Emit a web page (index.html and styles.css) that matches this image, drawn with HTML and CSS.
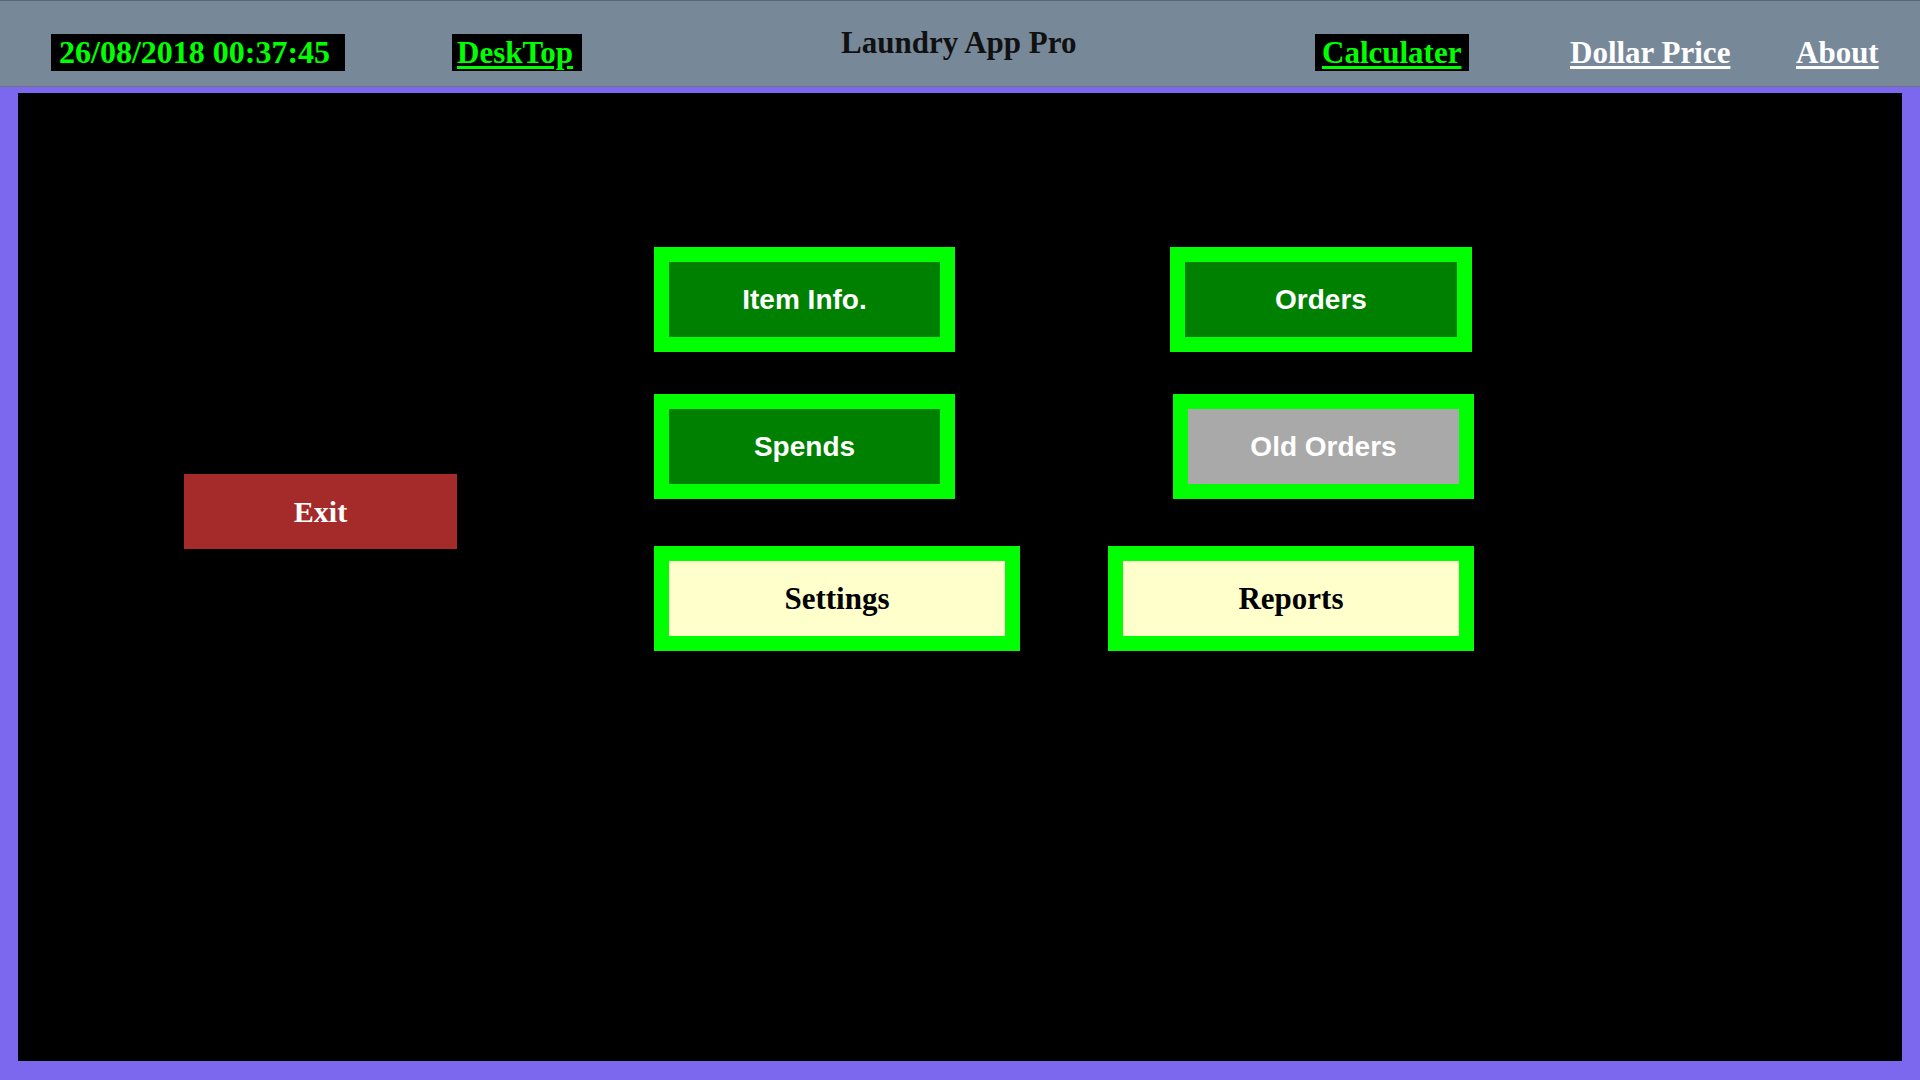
FILE: index.html
```html
<html lang="en">
<head>
    <meta charset="UTF-8">
    <meta name="viewport" content="width=device-width, initial-scale=1.0">
    <title>Laundry App Pro</title>

    <link rel="stylesheet" href="styles.css">
</head>
<body>
    <header class="topbar">
        <div class="topbar__clock" id="clock">26/08/2018 00:37:45</div>
        <a class="topbar__link topbar__link--boxed topbar__desk" href="#">DeskTop</a>
        <h1 class="topbar__title">Laundry App Pro</h1>
        <a class="topbar__link topbar__link--boxed topbar__calc" href="#">Calculater</a>
        <a class="topbar__link topbar__link--plain topbar__dollar" href="#">Dollar Price</a>
        <a class="topbar__link topbar__link--plain topbar__about" href="#">About</a>
    </header>

    <div class="frame">
        <div class="panel">
            <button class="exit">Exit</button>

            <div class="menu">
                <div class="menu__row">
                    <button class="tile tile--green">Item Info.</button>
                    <button class="tile tile--green tile--orders">Orders</button>
                </div>
                <div class="menu__row menu__row--second">
                    <button class="tile tile--green">Spends</button>
                    <button class="tile tile--gray tile--old">Old Orders</button>
                </div>
                <div class="menu__row menu__row--third">
                    <button class="tile tile--yellow">Settings</button>
                    <button class="tile tile--yellow tile--reports">Reports</button>
                </div>
            </div>
        </div>
    </div>
</body>
</html>
```

FILE: styles.css
```css
html, body {
    margin: 0;
    height: 100%;
}

body {
    display: flex;
    flex-direction: column;
    background-color: #7b68ee;
    font-family: "Liberation Serif", "Times New Roman", serif;
}

/* top bar */
.topbar {
    box-sizing: border-box;
    height: 87px;
    display: flex;
    align-items: flex-start;
    padding: 23px 0 0 51px;
    background-color: #778899;
    border-top: 1px solid #5c6670;
    border-bottom: 1px solid #6a7682;
}

.topbar > * {
    box-sizing: border-box;
    height: 37px;
    line-height: 37px;
    margin: 10px 0 0 0;
    font-size: 31px;
    font-weight: bold;
    white-space: nowrap;
}

.topbar__clock {
    width: 294px;
    padding-left: 8px;
    font-size: 32px;
    color: #00ff00;
    background-color: #000;
}

.topbar__link {
    text-decoration: underline;
    text-decoration-thickness: 3px;
    text-underline-offset: 3px;
}

.topbar__link--boxed {
    padding-left: 5px;
    color: #00ff00;
    background-color: #000;
}

.topbar__link--plain {
    color: #fff;
}

.topbar__desk {
    width: 130px;
    margin-left: 107px;
}

.topbar__title {
    width: 233px;
    margin: 0 0 0 259px;
    color: #111;
}

.topbar__calc {
    width: 154px;
    margin-left: 241px;
    padding-left: 7px;
}

.topbar__dollar {
    width: 159px;
    margin-left: 101px;
}

.topbar__about {
    width: 84px;
    margin-left: 67px;
}

/* main area */
.frame {
    flex: 1;
    display: flex;
    padding: 6px 18px 19px 18px;
}

.panel {
    flex: 1;
    display: flex;
    align-items: flex-start;
    padding: 154px 0 0 166px;
    background-color: #000;
}

button {
    box-sizing: border-box;
    margin: 0;
    padding: 0;
    cursor: pointer;
}

.exit {
    width: 273px;
    height: 75px;
    margin-top: 227px;
    border: none;
    color: #fff;
    background-color: #a52a2a;
    font-family: "Liberation Serif", "Times New Roman", serif;
    font-size: 30px;
    font-weight: bold;
}

.menu {
    margin-left: 197px;
}

.menu__row {
    display: flex;
}

.menu__row--second {
    margin-top: 42px;
}

.menu__row--third {
    margin-top: 47px;
}

.tile {
    width: 301px;
    height: 105px;
    border: 15px solid #00ff00;
    font-size: 28px;
    font-weight: bold;
}

.tile--green {
    color: #fff;
    background-color: #008000;
    font-family: "Liberation Sans", Arial, sans-serif;
}

.tile--gray {
    color: #fff;
    background-color: #a9a9a9;
    font-family: "Liberation Sans", Arial, sans-serif;
}

.tile--yellow {
    width: 366px;
    color: #000;
    background-color: #ffffcc;
    font-family: "Liberation Serif", "Times New Roman", serif;
    font-size: 31px;
}

.tile--orders {
    width: 302px;
    margin-left: 215px;
}

.tile--old {
    margin-left: 218px;
}

.tile--reports {
    margin-left: 88px;
}

.tile:hover {
    filter: brightness(1.1);
}
```
